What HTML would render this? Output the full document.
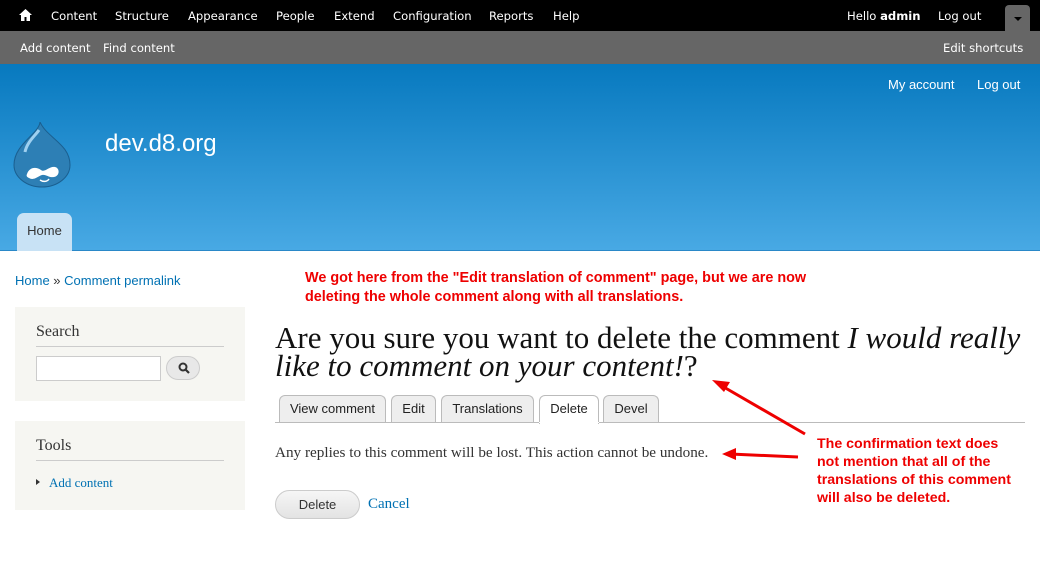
<!DOCTYPE html>
<html><head><style>
*{margin:0;padding:0;box-sizing:border-box}
body{width:1040px;height:567px;overflow:hidden;background:#fff;font-family:"DejaVu Sans","Liberation Sans",sans-serif;position:relative}
.a{position:absolute;white-space:nowrap}
#tb{position:absolute;left:0;top:0;width:1040px;height:31px;background:#000;color:#fff;font-size:11.6px}
#sc{position:absolute;left:0;top:31px;width:1040px;height:33px;background:#666;color:#fff;font-size:11.6px}
#hd{position:absolute;left:0;top:64px;width:1040px;height:187px;background:linear-gradient(#0779bf,#48a9e4);border-bottom:1px solid #2a88c8}
.serif{font-family:"Liberation Serif","DejaVu Serif",serif}
.tab{position:absolute;top:395px;height:28px;background:#eee;border:1px solid #bbb;border-bottom:none;border-radius:6px 6px 0 0;font:13px "Liberation Sans",sans-serif;text-align:center;line-height:26px;color:#222}
.red{color:#e00;font:bold 14.4px "Liberation Sans",sans-serif}
.blk{position:absolute;left:15px;width:230px;background:#f6f6f2}
</style></head><body>
<div id="tb">
<svg class="a" style="left:19px;top:9px" width="13" height="12" viewBox="0 0 13 12"><path d="M6.5 0L0 6h2v6h3.5V8h2v4H11V6h2z" fill="#fff"/></svg>
<span class="a" style="left:51px;top:9px">Content</span>
<span class="a" style="left:115px;top:9px">Structure</span>
<span class="a" style="left:188px;top:9px">Appearance</span>
<span class="a" style="left:276px;top:9px">People</span>
<span class="a" style="left:334px;top:9px">Extend</span>
<span class="a" style="left:393px;top:9px">Configuration</span>
<span class="a" style="left:489px;top:9px">Reports</span>
<span class="a" style="left:553px;top:9px">Help</span>
<span class="a" style="left:847px;top:9px">Hello <b>admin</b></span>
<span class="a" style="left:938px;top:9px">Log out</span>
<div class="a" style="left:1005px;top:5px;width:25px;height:26px;background:#666;border-radius:4px 4px 0 0"><div style="margin:12px auto 0;width:0;height:0;border-left:4px solid transparent;border-right:4px solid transparent;border-top:4px solid #000"></div></div>
</div>
<div id="sc">
<span class="a" style="left:20px;top:10px">Add content</span>
<span class="a" style="left:103px;top:10px">Find content</span>
<span class="a" style="left:943px;top:10px">Edit shortcuts</span>
</div>
<div id="hd">
<span class="a" style="left:888px;top:13px;color:#fff;font:13px 'Liberation Sans',sans-serif">My account</span>
<span class="a" style="left:977px;top:13px;color:#fff;font:13px 'Liberation Sans',sans-serif">Log out</span>
<svg class="a" style="left:13px;top:58px" width="60" height="66" viewBox="0 0 60 66"><path d="M27 0C26 12 1 22 1 43a28 22 0 0 0 56 0C57 22 34 16 27 0z" fill="#2d7fb5" stroke="#1a5f90"/><path d="M14 52c2-6 8-8 14-4 4 3 8-4 14-3 5 1 5 9-1 10-5 1-8-3-12-2-4 1-8 6-13 3-2-1-3-2-2-4z" fill="#fff"/><path d="M27 58c3 2 7 2 9-1" stroke="#fff" stroke-width="1.5" fill="none"/><path d="M12 30c2-10 10-16 14-22" stroke="#9fd0f0" stroke-width="3" fill="none"/></svg>
<span class="a" style="left:105px;top:66px;color:#fff;font:24px 'Liberation Sans',sans-serif">dev.d8.org</span>
<div class="a" style="left:17px;top:149px;width:55px;height:38px;background:#c8e2f5;border-radius:7px 7px 0 0;font:13px 'Liberation Sans',sans-serif;color:#333;text-align:center;line-height:36px">Home</div>
</div>
<span class="a" style="left:15px;top:273px;font:13px 'Liberation Sans',sans-serif;color:#0071b3">Home <span style="color:#333">»</span> Comment permalink</span>
<div class="blk" style="top:307px;height:94px">
<div class="serif" style="position:absolute;left:21px;top:16px;font-size:16px;color:#333">Search</div>
<div style="position:absolute;left:21px;top:39px;width:188px;border-top:1px solid #ccc"></div>
<div style="position:absolute;left:21px;top:49px;width:125px;height:25px;background:#fff;border:1px solid #ccc"></div>
<div style="position:absolute;left:151px;top:49px;width:34px;height:24px;background:#e8e8e8;border:1px solid #ccc;border-radius:12px"><svg style="position:absolute;left:11px;top:5px" width="12" height="12"><circle cx="5" cy="5" r="3.5" stroke="#333" stroke-width="2" fill="none"/><path d="M7.5 7.5L11 11" stroke="#333" stroke-width="2.2"/></svg></div>
</div>
<div class="blk" style="top:421px;height:89px">
<div class="serif" style="position:absolute;left:21px;top:16px;font-size:16px;color:#333">Tools</div>
<div style="position:absolute;left:21px;top:39px;width:188px;border-top:1px solid #ccc"></div>
<div style="position:absolute;left:21px;top:58px;width:0;height:0;border-top:3px solid transparent;border-bottom:3px solid transparent;border-left:4px solid #333"></div>
<div class="serif" style="position:absolute;left:34px;top:54px;font-size:13px;color:#0071b3">Add content</div>
</div>
<div class="a red" style="left:305px;top:269px;line-height:19px">We got here from the "Edit translation of comment" page, but we are now<br>deleting the whole comment along with all translations.</div>
<div class="a serif" style="left:275px;top:324px;font-size:31px;line-height:28px;color:#111">Are you sure you want to delete the comment <i>I would really</i><br><i>like to comment on your content!</i>?</div>
<div class="tab" style="left:279px;width:107px">View comment</div>
<div class="tab" style="left:391px;width:45px">Edit</div>
<div class="tab" style="left:441px;width:93px">Translations</div>
<div class="tab" style="left:539px;width:60px;background:#fff;height:29px">Delete</div>
<div class="tab" style="left:603px;width:56px">Devel</div>
<div class="a" style="left:275px;top:422px;width:750px;border-top:1px solid #bbb"></div>
<div class="a" style="left:539px;top:422px;width:60px;border-top:1px solid #fff"></div>
<div class="a serif" style="left:275px;top:444px;font-size:15.2px;color:#333">Any replies to this comment will be lost. This action cannot be undone.</div>
<div class="a" style="left:275px;top:490px;width:85px;height:29px;background:linear-gradient(#f6f6f6,#e3e3e3);border:1px solid #ccc;border-radius:15px;font:13px 'Liberation Sans',sans-serif;color:#333;text-align:center;line-height:27px">Delete</div>
<div class="a serif" style="left:368px;top:496px;font-size:15px;color:#0071b3">Cancel</div>
<div class="a red" style="left:817px;top:435px;line-height:18px;font-size:14.2px">The confirmation text does<br>not mention that all of the<br>translations of this comment<br>will also be deleted.</div>
<svg class="a" style="left:0;top:0" width="1040" height="567"><g stroke="#e00" stroke-width="3" fill="#e00"><line x1="805" y1="434" x2="722" y2="386"/><line x1="798" y1="457" x2="730" y2="454"/></g><path d="M712 380l18 2-6 10z" fill="#e00"/><path d="M722 454l14-6v12z" fill="#e00"/></svg>
</body></html>
